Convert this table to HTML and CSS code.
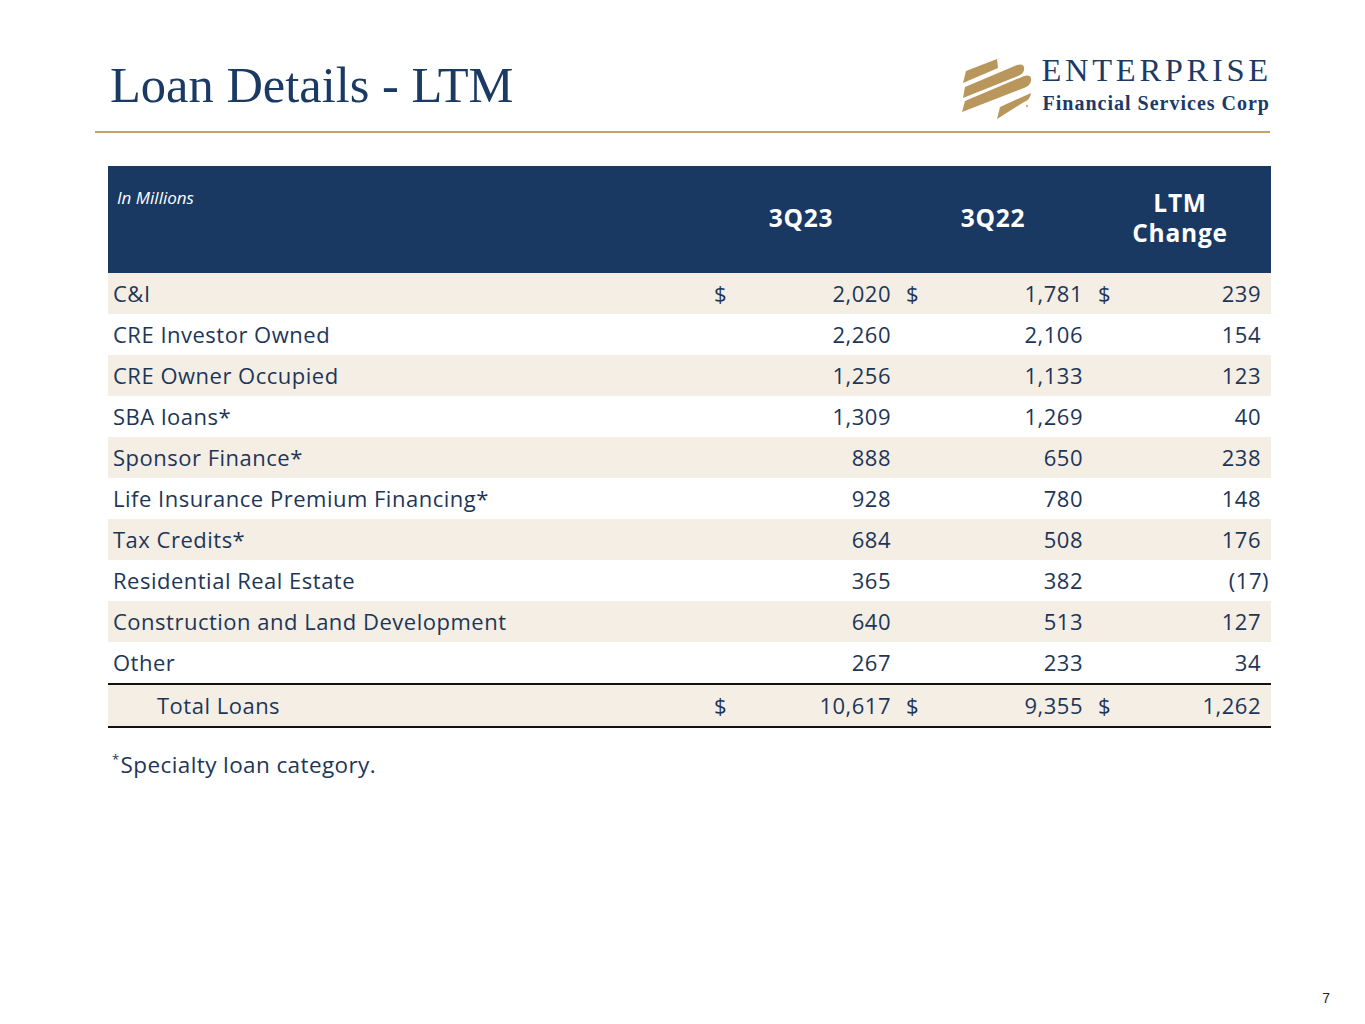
FILE: index.html
```html
<!DOCTYPE html>
<html>
<head>
<meta charset="utf-8">
<link rel="stylesheet" href="styles.css">
</head>
<body>
<div class="page">
  <header class="top">
    <h1 class="title">Loan Details - LTM</h1>
    <div class="logo">
      <svg class="mark" width="76" height="68" viewBox="0 0 76 68">
        <path d="M6,16 L37,4 L38,13 L3,28 Z" fill="#b8965c"/>
        <path d="M5,32 L57,10 Q65,8 64,15 Q63,19 58,21 L3,43 Z" fill="#b8965c"/>
        <path d="M5,46 L64,21 Q72,19 71,26 Q70,31 64,33 L2,57 Z" fill="#b8965c"/>
        <path d="M40,52 L71,38 Q70,45 64,47 L37,64 Z" fill="#b8965c"/>
        <circle cx="67" cy="51" r="1.2" fill="#c8b58e"/>
      </svg>
      <div class="logo-text">
        <div class="logo-big">ENTERPRISE</div>
        <div class="logo-small">Financial Services Corp</div>
      </div>
    </div>
  </header>
  <div class="rule"></div>

  <table class="loans">
    <colgroup>
      <col class="c-label"><col class="c-num"><col class="c-num"><col class="c-last">
    </colgroup>
    <thead>
      <tr>
        <th class="h-label"><span class="units">In Millions</span></th>
        <th>3Q23</th>
        <th>3Q22</th>
        <th><span class="hl">LTM</span><span class="hl">Change</span></th>
      </tr>
    </thead>
    <tbody>
      <tr class="shade"><td class="lbl">C&amp;I</td><td><span class="cur">$</span>2,020</td><td><span class="cur">$</span>1,781</td><td><span class="cur">$</span>239</td></tr>
      <tr><td class="lbl">CRE Investor Owned</td><td>2,260</td><td>2,106</td><td>154</td></tr>
      <tr class="shade"><td class="lbl">CRE Owner Occupied</td><td>1,256</td><td>1,133</td><td>123</td></tr>
      <tr><td class="lbl">SBA loans*</td><td>1,309</td><td>1,269</td><td>40</td></tr>
      <tr class="shade"><td class="lbl">Sponsor Finance*</td><td>888</td><td>650</td><td>238</td></tr>
      <tr><td class="lbl">Life Insurance Premium Financing*</td><td>928</td><td>780</td><td>148</td></tr>
      <tr class="shade"><td class="lbl">Tax Credits*</td><td>684</td><td>508</td><td>176</td></tr>
      <tr><td class="lbl">Residential Real Estate</td><td>365</td><td>382</td><td class="neg">(17)</td></tr>
      <tr class="shade"><td class="lbl">Construction and Land Development</td><td>640</td><td>513</td><td>127</td></tr>
      <tr><td class="lbl">Other</td><td>267</td><td>233</td><td>34</td></tr>
      <tr class="shade total"><td class="lbl indent">Total Loans</td><td><span class="cur">$</span>10,617</td><td><span class="cur">$</span>9,355</td><td><span class="cur">$</span>1,262</td></tr>
    </tbody>
  </table>

  <p class="note"><sup>*</sup>Specialty loan category.</p>

  <footer class="foot">7</footer>
</div>
</body>
</html>
```

FILE: styles.css
```css
html, body {
  margin: 0;
  padding: 0;
  background: #ffffff;
}

.page {
  width: 1365px;
  height: 1024px;
  box-sizing: border-box;
  padding: 0 95px 0 95px;
  display: flex;
  flex-direction: column;
  overflow: hidden;
}

.top {
  display: flex;
  justify-content: space-between;
  align-items: flex-start;
  padding: 0 0 0 15px;
  height: 131px;
  box-sizing: border-box;
}

.title {
  margin: 55px 0 0 0;
  font-family: "Liberation Serif", serif;
  font-weight: normal;
  font-size: 50.5px;
  line-height: 60px;
  color: #1b3a63;
}

.logo {
  display: flex;
  align-items: flex-start;
  margin: 55px 0 0 0;
}

.mark {
  display: block;
  margin: 0 7px 0 0;
}

.logo-text {
  display: flex;
  flex-direction: column;
  font-family: "Liberation Serif", serif;
  color: #1c3a66;
}

.logo-big {
  font-size: 32.5px;
  line-height: 28px;
  letter-spacing: 3.7px;
  margin-right: -3px;
  margin-left: -1px;
  margin-top: 1px;
}

.logo-small {
  margin-top: 7px;
  font-size: 20px;
  font-weight: bold;
  line-height: 24px;
  letter-spacing: 1px;
}

.rule {
  height: 2px;
  background: #c4a465;
}

.loans {
  margin: 33px 0 0 13px;
  width: 1163px;
  border-collapse: collapse;
  table-layout: fixed;
  font-family: "Open Sans", Lato, sans-serif;
  font-size: 22px;
  letter-spacing: 0.5px;
  color: #1d3658;
}

.c-label { width: 597px; }
.c-num { width: 192px; }
.c-last { width: 182px; }

.loans thead tr {
  background: #1a3962;
  height: 107px;
}

.loans th {
  color: #ffffff;
  font-weight: bold;
  font-size: 24.5px;
  letter-spacing: 0.8px;
  line-height: 30px;
  text-align: center;
  vertical-align: middle;
  padding: 0 0 4px 0;
}

.hl {
  display: block;
  line-height: 30px;
}

.loans th.h-label {
  text-align: left;
  vertical-align: top;
  padding: 21px 0 0 9px;
  letter-spacing: 0;
  font-size: 17px;
  line-height: 22px;
}

.units {
  font-style: italic;
  font-weight: normal;
  font-size: 17px;
  line-height: 22px;
}

.loans tbody tr {
  height: 41px;
}

.loans tbody tr.shade {
  background: #f4eee5;
}

.loans td {
  padding: 0 6px 0 9px;
  text-align: right;
  white-space: nowrap;
  line-height: 41px;
}

.loans td:last-child {
  padding-right: 10px;
}

.loans td.neg {
  padding-right: 2px;
}

.loans td.lbl {
  text-align: left;
  padding-left: 5px;
}

.loans td.indent {
  padding-left: 49px;
}

.cur {
  float: left;
}

.loans tr.total td {
  border-top: 2px solid #111111;
  border-bottom: 2px solid #111111;
}

.note {
  margin: 21px 0 0 17px;
  font-family: "Open Sans", Lato, sans-serif;
  font-size: 22.5px;
  letter-spacing: 0.4px;
  color: #1d3658;
}

.note sup {
  font-size: 13px;
  vertical-align: 9px;
  line-height: 0;
  margin-right: 1px;
}

.foot {
  margin-top: auto;
  align-self: flex-end;
  margin-right: -60px;
  margin-bottom: 18px;
  font-family: "Liberation Sans", sans-serif;
  font-size: 14px;
  color: #222222;
}
```
